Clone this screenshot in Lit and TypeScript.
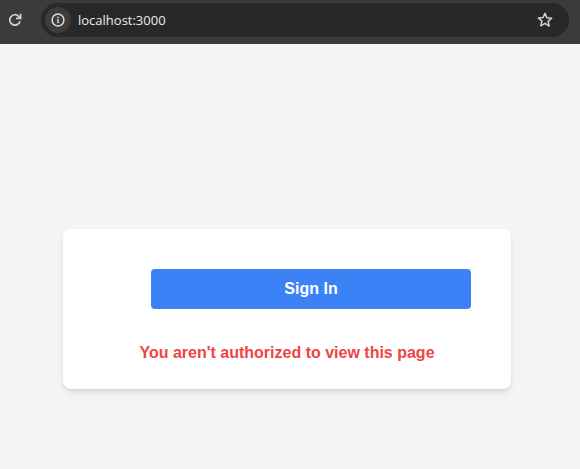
import { LitElement, html, css } from "lit";
import { customElement } from "lit/decorators.js";

@customElement("app-root")
export class AppRoot extends LitElement {
  static styles = css`
    :host { display: flex; flex-direction: column; width: 580px; height: 469px; background: #f3f4f6; overflow: hidden; font-family: "Liberation Sans", Arial, sans-serif; }
    .toolbar { flex: none; height: 44px; background: #3b3b3b; display: flex; align-items: flex-start; box-sizing: border-box; padding: 3px 11px 0 8px; gap: 19px; }
    .reload { width: 14px; height: 14px; margin-top: 10px; flex: none; }
    .omnibox { flex: 1; height: 34px; border-radius: 17px; background: #282828; display: flex; align-items: center; padding: 0 15px 0 4px; }
    .info { width: 26px; height: 26px; border-radius: 50%; background: #3c3c3c; display: flex; align-items: center; justify-content: center; flex: none; }
    .url { margin-left: 7px; flex: 1; color: #ececec; font: 13px "Open Sans", "Noto Sans", sans-serif; }
    .main { flex: 1; display: flex; flex-direction: column; align-items: center; padding: 185px 6px 0 0; }
    .card { width: 448px; height: 160px; box-sizing: border-box; background: #fff; border-radius: 8px; padding-top: 40px; box-shadow: 0 4px 6px -1px rgba(0,0,0,.1), 0 2px 4px -2px rgba(0,0,0,.1); display: flex; flex-direction: column; align-items: center; }
    .btn { width: 320px; height: 40px; margin-left: 48px; flex: none; border: none; border-radius: 4px; background: #3b82f6; color: #fff; font: 700 16px "Liberation Sans", Arial, sans-serif; padding: 0; }
    .err { margin: 35px 0 0; color: #ef4444; font-size: 16px; font-weight: 700; line-height: 18px; }
  `;
  render() {
    return html`
      <div class="toolbar">
        <svg class="reload" viewBox="0 0 14 14" fill="none" stroke="#d2d2d2" stroke-width="1.7">
          <path d="M12 8.2A5.2 5.2 0 1 1 10.7 3.3L12.2 4.8"/>
          <path d="M12.6 0.8v4.6H8"/>
        </svg>
        <div class="omnibox">
          <div class="info">
            <svg width="14" height="14" viewBox="0 0 14 14" fill="none">
              <circle cx="7" cy="7" r="5.9" stroke="#dcdcdc" stroke-width="1.5"/>
              <rect x="6.25" y="6.2" width="1.5" height="4" fill="#dcdcdc"/>
              <rect x="6.25" y="3.7" width="1.5" height="1.5" fill="#dcdcdc"/>
            </svg>
          </div>
          <span class="url">localhost:3000</span>
          <svg width="18" height="18" viewBox="0 0 18 18" fill="none">
            <path d="M9 2.4l1.9 4.4 4.8.4-3.6 3.2 1.1 4.7L9 12.3l-4.2 2.5 1.1-4.7-3.6-3.2 4.8-.4z" stroke="#d2d2d2" stroke-width="1.5" stroke-linejoin="round"/>
          </svg>
        </div>
      </div>
      <div class="main">
        <div class="card">
          <button class="btn">Sign In</button>
          <p class="err">You aren't authorized to view this page</p>
        </div>
      </div>
    `;
  }
}
